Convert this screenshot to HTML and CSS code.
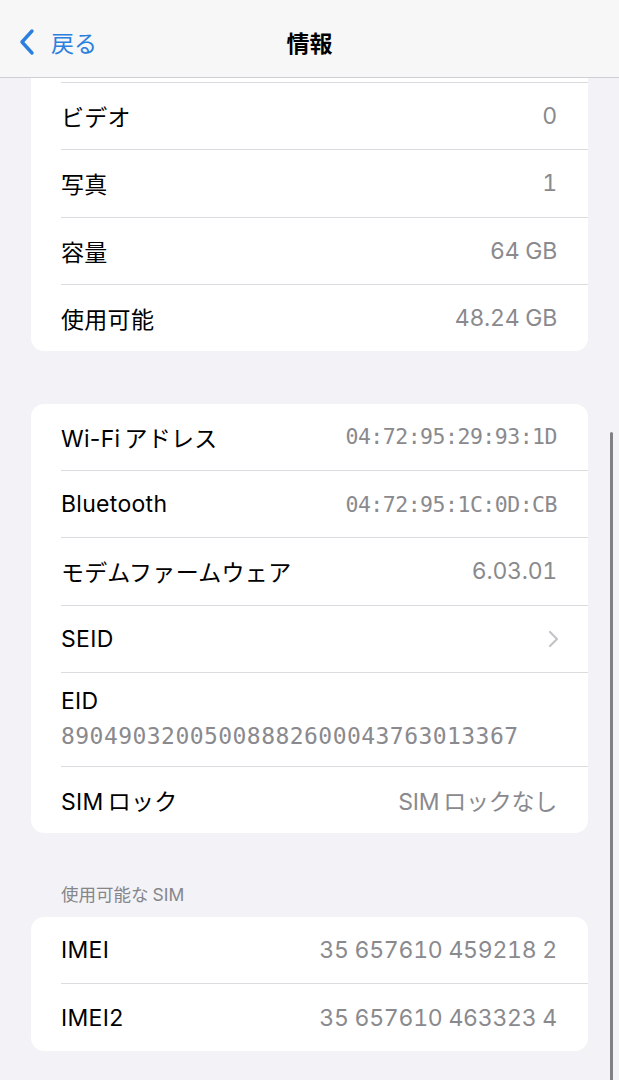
FILE: index.html
```html
<!DOCTYPE html>
<html lang="ja">

<head>
    <meta charset="utf-8">
    <title>情報</title>
    <link rel="stylesheet" href="styles.css">
</head>

<body>
    <div class="navbar">
        <div class="back">
            <svg class="back-chevron" width="18" height="28" viewBox="0 0 18 28">
                <polyline points="14,3 4,14 14,25" fill="none" stroke="currentColor" stroke-width="3.4" stroke-linecap="round" stroke-linejoin="round" />
            </svg>
            <span>戻る</span>
        </div>
        <div class="title">情報</div>
        <div></div>
    </div>

    <div class="content">
        <div class="group group-cut">
            <div class="row row-cut"></div>
            <div class="row"><span class="label">ビデオ</span><span class="value">0</span></div>
            <div class="row"><span class="label">写真</span><span class="value">1</span></div>
            <div class="row"><span class="label">容量</span><span class="value">64 GB</span></div>
            <div class="row"><span class="label">使用可能</span><span class="value">48.24 GB</span></div>
        </div>

        <div class="group">
            <div class="row"><span class="label">Wi-Fi<span class="gap">アドレス</span></span><span class="value mono">04:72:95:29:93:1D</span></div>
            <div class="row"><span class="label">Bluetooth</span><span class="value mono">04:72:95:1C:0D:CB</span></div>
            <div class="row"><span class="label">モデムファームウェア</span><span class="value">6.03.01</span></div>
            <div class="row">
                <span class="label">SEID</span>
                <svg class="chevron" width="12" height="20" viewBox="0 0 12 20">
                    <polyline points="3,3 10,10 3,17" fill="none" stroke="currentColor" stroke-width="2.2" stroke-linecap="round" stroke-linejoin="round" />
                </svg>
            </div>
            <div class="row row-stack">
                <span class="label">EID</span>
                <span class="value mono eid">89049032005008882600043763013367</span>
            </div>
            <div class="row"><span class="label">SIM<span class="gap">ロック</span></span><span class="value">SIM<span class="gap">ロックなし</span></span></div>
        </div>

        <div class="section-header">使用可能な<span class="gap">SIM</span></div>
        <div class="group">
            <div class="row"><span class="label">IMEI</span><span class="value">35 657610 459218 2</span></div>
            <div class="row"><span class="label">IMEI2</span><span class="value">35 657610 463323 4</span></div>
        </div>
    </div>

    <div class="scrollbar"></div>
</body>

</html>
```

FILE: styles.css
```css
body {
    margin: 0;
    background: #f2f2f7;
    color: #000;
    font-family: Inter, "Noto Sans CJK JP", sans-serif;
    font-size: 23px;
}

.navbar {
    display: grid;
    grid-template-columns: 1fr auto 1fr;
    align-items: center;
    box-sizing: border-box;
    height: 78px;
    padding-top: 6px;
    background: #f7f7f8;
    border-bottom: 1px solid #cfcfd3;
}

.back {
    display: flex;
    align-items: center;
    gap: 15px;
    padding-left: 18px;
    color: #2b7fde;
}

.back-chevron {
    display: block;
}

.title {
    font-weight: bold;
}

.group {
    margin: 0 31px;
    background: #fff;
    border-radius: 13px;
    overflow: hidden;
}

.group + .group {
    margin-top: 52.5px;
}

.group-cut {
    border-radius: 0 0 13px 13px;
}

.row {
    display: flex;
    justify-content: space-between;
    align-items: center;
    height: 66.3px;
    margin-left: 30px;
    padding-right: 31px;
    border-bottom: 1px solid #dcdce0;
}

.row:last-child {
    border-bottom: none;
}

.row-cut {
    height: 4px;
}

.row-stack {
    flex-direction: column;
    align-items: flex-start;
    justify-content: flex-start;
    height: auto;
    padding-top: 13px;
    padding-bottom: 15px;
    gap: 5px;
}

.row-stack .label,
.row-stack .value {
    line-height: 30px;
}

.label {
    letter-spacing: 0.3px;
}

.gap {
    margin-left: 4px;
}

.value {
    color: #8a8a8e;
    font-variant-numeric: tabular-nums;
    letter-spacing: -0.25px;
}

.mono {
    font-family: "DejaVu Sans Mono", monospace;
    font-size: 21.5px;
    letter-spacing: -0.5px;
}

.eid {
    font-size: 23px;
    letter-spacing: 0.45px;
}

.chevron {
    display: block;
    color: #c4c4c8;
    margin-right: -2px;
}

.section-header {
    padding: 52px 0 12px 61px;
    line-height: 20px;
    font-size: 17.5px;
    color: #86868a;
}

.scrollbar {
    position: absolute;
    top: 432px;
    left: 610px;
    width: 3px;
    height: 660px;
    border-radius: 2px;
    background: #808085;
}
```
